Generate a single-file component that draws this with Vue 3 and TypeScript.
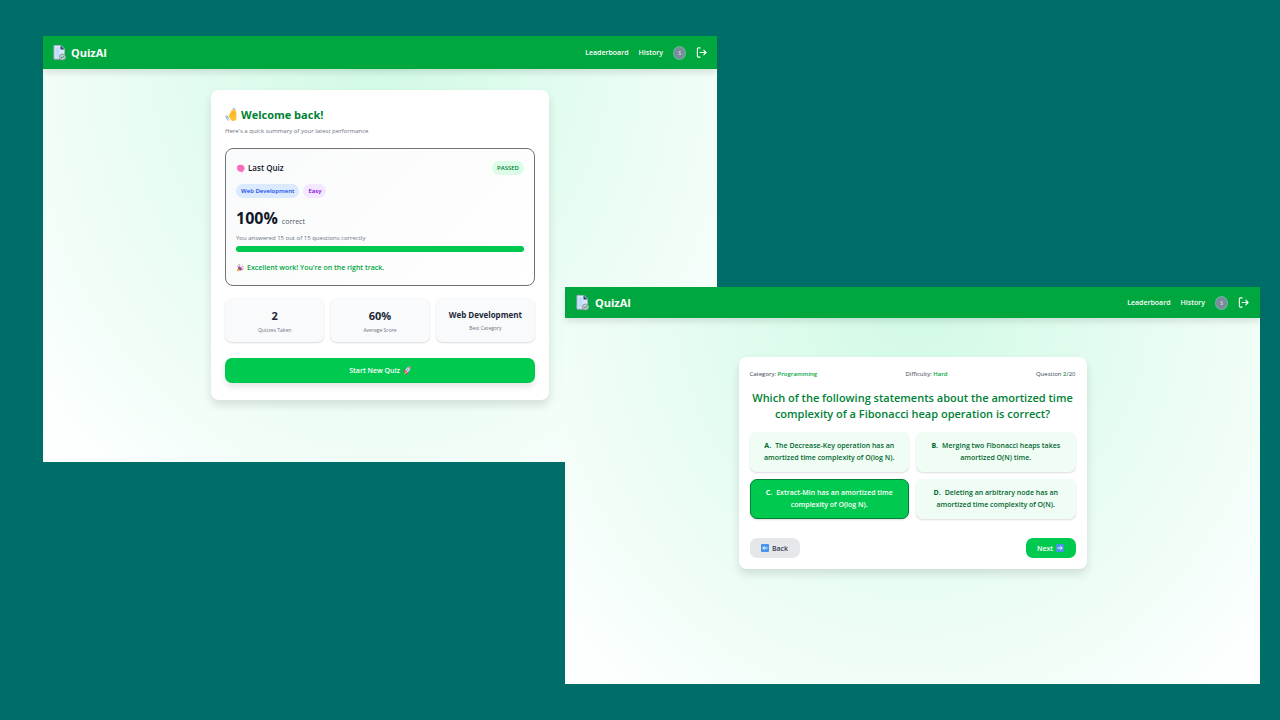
<script setup lang="ts">
import { ref } from 'vue'

interface Screen {
  id: 'summary' | 'question'
}
interface Stat {
  value: string
  label: string
  compact?: boolean
}
interface Option {
  letter: string
  text: string
}

const screens: Screen[] = [{ id: 'summary' }, { id: 'question' }]

const score = 100
const stats: Stat[] = [
  { value: '2', label: 'Quizzes Taken' },
  { value: '60%', label: 'Average Score' },
  { value: 'Web Development', label: 'Best Category', compact: true },
]

const options: Option[] = [
  { letter: 'A', text: 'The Decrease-Key operation has an amortized time complexity of O(log N).' },
  { letter: 'B', text: 'Merging two Fibonacci heaps takes amortized O(N) time.' },
  { letter: 'C', text: 'Extract-Min has an amortized time complexity of O(log N).' },
  { letter: 'D', text: 'Deleting an arbitrary node has an amortized time complexity of O(N).' },
]
const selected = ref('C')
</script>

<template>
  <main class="stage">
    <section v-for="screen in screens" :key="screen.id" class="window" :class="screen.id">
      <header class="topbar">
        <a class="brand" href="#">
          <svg class="logo" viewBox="0 0 26 32" preserveAspectRatio="none" aria-hidden="true">
            <path d="M2 1h14l7 7v20H2z" fill="#d6e8fb" stroke="#a9b4cf" stroke-width="2" />
            <path d="M5 5h8v19H5z" fill="#bfdcf8" />
            <path d="M15 1l8 8h-8z" fill="#30406e" />
            <path d="M3 29h13" stroke="#8f9bb0" stroke-width="2" />
            <circle cx="19" cy="24" r="6" fill="#b4d2c6" stroke="#8b9b9c" stroke-width="2" />
            <path d="M16 24l2 2 4-4" fill="none" stroke="#55908a" stroke-width="2" />
          </svg>
          <span>QuizAI</span>
        </a>
        <nav class="nav">
          <a href="#">Leaderboard</a>
          <a href="#">History</a>
          <span class="avatar">S</span>
          <button class="logout" type="button" aria-label="Log out">
            <svg viewBox="0 0 24 24" fill="none" stroke="currentColor" stroke-width="2.4" stroke-linecap="round" stroke-linejoin="round">
              <path d="M9 2H5a2 2 0 0 0-2 2v16a2 2 0 0 0 2 2h4" />
              <path d="M9 12h13M17 7l5 5-5 5" />
            </svg>
          </button>
        </nav>
      </header>

      <div v-if="screen.id === 'summary'" class="card">
        <h1 class="welcome">
          <svg class="wave" viewBox="0 0 24 28" preserveAspectRatio="none" aria-hidden="true">
            <path d="M9 13l4-8c1-3 4-3 4-1 2-1 4 0 4 2 2 1 2 3 2 5v8c0 5-3 7-6 7-5 0-6-4-9-8-2-3-1-5 1-5z" fill="#ffc02e" />
            <path d="M15 8l-2 7M18 7l-1 8" stroke="#ed9b2d" stroke-width="1.2" fill="none" />
            <path d="M2 15c0 5 2 8 5 10M5 16c0 3 1 5 3 7M16 1c3 0 4 1 5 3" stroke="#6ca9d2" stroke-width="2" fill="none" />
          </svg>
          Welcome back!
        </h1>
        <p class="subtitle">Here's a quick summary of your latest performance</p>

        <section class="last">
          <div class="last-head">
            <h2>
              <svg class="brain" viewBox="0 0 20 20" preserveAspectRatio="none" aria-hidden="true">
                <path d="M2 9C1 4 6 1 10 2c5-1 9 3 9 7 1 4-1 6-3 6l-1 4-4-2c-5 1-9-3-9-8z" fill="#fb72bd" />
                <path d="M5 6c3-2 4 1 3 3M11 4c-1 3 1 4 4 4M5 12c3-2 5 0 5 3M12 13c0-3 2-3 4-2" fill="none" stroke="#e660ac" stroke-width="1.2" />
              </svg>
              Last Quiz
            </h2>
            <span class="chip passed">PASSED</span>
          </div>
          <div class="chips">
            <span class="chip topic">Web Development</span>
            <span class="chip level">Easy</span>
          </div>
          <p class="score"><strong>{{ score }}%</strong> <span>correct</span></p>
          <p class="answered">You answered 15 out of 15 questions correctly</p>
          <div class="track" role="progressbar" :aria-valuenow="score" aria-valuemin="0" aria-valuemax="100" aria-label="Score">
            <div class="fill" :style="{ width: score + '%' }"></div>
          </div>
          <p class="praise">
            <svg class="party" viewBox="0 0 20 20" preserveAspectRatio="none" aria-hidden="true">
              <path d="M2 19L6 7l8 8z" fill="#f8b53a" />
              <path d="M5 10l6 6M4 14l3 3" stroke="#d3573d" stroke-width="1.6" />
              <ellipse cx="10" cy="11" rx="3" ry="6" transform="rotate(-45 10 11)" fill="#7f4aa0" />
              <path d="M10 8c-2-3 0-4-1-7M12 10c2-4 5-3 7-3M13 13c2-1 4 0 5 2" fill="none" stroke="#e94c92" stroke-width="1.8" />
              <path d="M14 2h2v2h-2zM3 4h2v2H3z" fill="#36a4e5" />
              <path d="M17 10h2v2h-2zM6 1h2v2H6z" fill="#43b76a" />
            </svg>
            Excellent work! You're on the right track.
          </p>
        </section>

        <div class="stats">
          <div v-for="stat in stats" :key="stat.label" class="stat" :class="{ compact: stat.compact }">
            <strong>{{ stat.value }}</strong>
            <span>{{ stat.label }}</span>
          </div>
        </div>

        <button class="start" type="button">
          Start New Quiz
          <svg class="rocket" viewBox="0 0 20 20" preserveAspectRatio="none" aria-hidden="true">
            <path d="M8 7l-7 3 1 4 5 1M13 12l-2 7-4-1-1-4" fill="#e63d67" />
            <path d="M5 13C7 5 12 1 19 1c0 7-4 12-11 15z" fill="#dbe2ee" />
            <path d="M13 2l6-1-1 6z" fill="#ea4774" />
            <circle cx="12" cy="8" r="2" fill="#5292d1" />
            <path d="M6 10l4 4" stroke="#d0518a" stroke-width="3" />
            <path d="M5 14l2 2-5 3z" fill="#ffae35" />
          </svg>
        </button>
      </div>

      <div v-else class="card">
        <div class="meta">
          <span>Category: <b>Programming</b></span>
          <span>Difficulty: <b>Hard</b></span>
          <span>Question <b>2</b>/20</span>
        </div>
        <h1 class="prompt">Which of the following statements about the amortized time complexity of a Fibonacci heap operation is correct?</h1>
        <div class="options">
          <button
            v-for="option in options"
            :key="option.letter"
            type="button"
            class="option"
            :class="{ active: option.letter === selected }"
            :aria-pressed="option.letter === selected"
            @click="selected = option.letter"
          >
            <b>{{ option.letter }}.</b>{{ option.text }}
          </button>
        </div>
        <div class="actions">
          <button class="step back" type="button">
            <svg viewBox="0 0 16 16" aria-hidden="true">
              <rect width="16" height="16" rx="2" fill="#4795ed" />
              <path d="M13 8H4M7 4.500L3.500 8 7 11.500" fill="none" stroke="#fff" stroke-width="2" />
            </svg>
            Back
          </button>
          <button class="step next" type="button">
            Next
            <svg viewBox="0 0 16 16" aria-hidden="true">
              <rect width="16" height="16" rx="2" fill="#4795ed" />
              <path d="M3 8h9M9 4.500L12.500 8 9 11.500" fill="none" stroke="#fff" stroke-width="2" />
            </svg>
          </button>
        </div>
      </div>
    </section>
  </main>
</template>

<style>
body {
  margin: 0;
  background: #006e68;
}
</style>

<style scoped>
* {
  box-sizing: border-box;
}
.stage {
  position: relative;
  min-height: 100vh;
  background: #006e68;
  font-family: "Open Sans", "Noto Sans", sans-serif;
  overflow: hidden;
}
h1,
h2,
p {
  margin: 0;
}
button {
  border: 0;
  padding: 0;
  font: inherit;
  cursor: pointer;
}
a {
  color: inherit;
  text-decoration: none;
}
.window {
  position: absolute;
  display: flex;
  flex-direction: column;
  align-items: center;
  background: radial-gradient(ellipse at top, #d0fae5, #ecfdf5 60%, #ffffff);
}
.window.summary {
  top: 36px;
  left: 43px;
  right: 563px;
  min-height: 426px;
}
.window.question {
  top: 287px;
  left: 565px;
  right: 20px;
  min-height: 397px;
}
.topbar {
  align-self: stretch;
  display: flex;
  align-items: center;
  justify-content: space-between;
  height: 31px;
  padding: 0 11px;
  background: #00a63e;
  color: #ffffff;
  box-shadow: 0 4px 6px rgba(0, 0, 0, 0.1);
}
.summary .topbar {
  height: 33px;
  padding: 0 10px;
}
.brand {
  display: flex;
  align-items: center;
  gap: 5px;
  font-size: 11px;
  font-weight: 700;
}
.question .brand {
  gap: 6px;
}
.logo {
  width: 13px;
  height: 16px;
}
.nav {
  display: flex;
  align-items: center;
  gap: 10px;
  font-size: 7px;
  font-weight: 600;
}
.avatar {
  display: flex;
  align-items: center;
  justify-content: center;
  width: 13px;
  height: 14px;
  border: 1px solid #64bd92;
  border-radius: 50%;
  background: #7b8b9d;
  color: #dce4ea;
  font-size: 5px;
}
.logout {
  display: flex;
  background: none;
  color: #ffffff;
}
.logout svg {
  width: 11px;
  height: 11px;
}
.card {
  background: #ffffff;
  border-radius: 8px;
  box-shadow: 0 5px 10px rgba(0, 0, 0, 0.12);
}
.summary .card {
  width: 338px;
  margin-top: 21px;
  padding: 17px 14px;
}
.welcome {
  display: flex;
  align-items: center;
  gap: 4px;
  color: #008236;
  font-size: 11px;
  line-height: 16px;
  font-weight: 700;
}
.wave {
  width: 12px;
  height: 14px;
}
.subtitle {
  margin-top: 2px;
  color: #6a7282;
  font-size: 6px;
  line-height: 12px;
}
.last {
  margin-top: 11px;
  padding: 12px 10px 11px;
  border: 1px solid #6f7276;
  border-radius: 8px;
  background: linear-gradient(135deg, #f9fafb, #ffffff);
}
.last-head {
  display: flex;
  align-items: center;
  justify-content: space-between;
}
.last-head h2 {
  display: flex;
  align-items: center;
  gap: 3px;
  color: #101828;
  font-size: 8px;
  line-height: 14px;
  font-weight: 600;
}
.brain {
  width: 9px;
  height: 9px;
}
.chip {
  padding: 0 5px;
  border-radius: 7px;
  font-size: 6px;
  line-height: 14px;
  font-weight: 600;
}
.passed {
  background: #dcfce7;
  color: #008236;
}
.chips {
  display: flex;
  gap: 4px;
  margin-top: 9px;
}
.topic {
  background: #dbeafe;
  color: #1447e6;
}
.level {
  background: #f3e8ff;
  color: #8200db;
}
.score {
  display: flex;
  align-items: baseline;
  gap: 4px;
  margin-top: 10px;
  line-height: 20px;
}
.score strong {
  color: #101828;
  font-size: 16px;
}
.score span {
  color: #4a5565;
  font-size: 7px;
}
.answered {
  color: #6a7282;
  font-size: 6px;
  line-height: 12px;
}
.track {
  height: 6px;
  margin-top: 2px;
  border-radius: 3px;
  background: #e5e7eb;
}
.fill {
  height: 100%;
  border-radius: 3px;
  background: #00c950;
}
.praise {
  display: flex;
  align-items: center;
  gap: 3px;
  margin-top: 10px;
  color: #00a63e;
  font-size: 7px;
  line-height: 12px;
  font-weight: 600;
}
.party {
  width: 8px;
  height: 8px;
}
.stats {
  display: grid;
  grid-template-columns: repeat(3, 1fr);
  gap: 6px;
  margin-top: 12px;
}
.stat {
  display: flex;
  flex-direction: column;
  align-items: center;
  height: 44px;
  padding-top: 10px;
  border-radius: 7px;
  background: #f9fafb;
  box-shadow: 0 1px 2px rgba(0, 0, 0, 0.14);
}
.stat strong {
  color: #1e2939;
  font-size: 11px;
  line-height: 16px;
}
.stat span {
  color: #6a7282;
  font-size: 5px;
  line-height: 12px;
}
.stat.compact strong {
  font-size: 8px;
  line-height: 14px;
}
.start {
  display: flex;
  align-items: center;
  justify-content: center;
  gap: 3px;
  width: 100%;
  height: 25px;
  margin-top: 16px;
  border-radius: 7px;
  background: #00c950;
  color: #ffffff;
  font-size: 7px;
  font-weight: 600;
  box-shadow: 0 4px 6px rgba(0, 0, 0, 0.1);
}
.rocket {
  width: 8px;
  height: 9px;
}
.question .card {
  width: 348px;
  margin-top: 39px;
  padding: 11px;
}
.meta {
  display: flex;
  justify-content: space-between;
  color: #364153;
  font-size: 6px;
  line-height: 12px;
  font-weight: 500;
}
.meta b {
  color: #00a63e;
  font-weight: 600;
}
.prompt {
  margin-top: 10px;
  color: #008236;
  font-size: 11px;
  line-height: 16px;
  font-weight: 600;
  text-align: center;
}
.options {
  display: grid;
  grid-template-columns: 1fr 1fr;
  gap: 7px;
  margin-top: 10px;
}
.option {
  min-height: 40px;
  padding: 7px 12px;
  border: 1px solid #f0fdf4;
  border-radius: 7px;
  background: #f0fdf4;
  color: #016630;
  font-size: 7px;
  line-height: 12px;
  font-weight: 600;
  text-align: center;
  box-shadow: 0 1px 2px rgba(0, 0, 0, 0.14);
}
.option b {
  margin-right: 4px;
  font-weight: 700;
}
.option.active {
  border-color: #008236;
  background: #00c950;
  color: #ffffff;
}
.actions {
  display: flex;
  justify-content: space-between;
  margin-top: 19px;
}
.step {
  display: flex;
  align-items: center;
  justify-content: center;
  gap: 3px;
  width: 50px;
  height: 20px;
  border-radius: 7px;
  font-size: 7px;
  font-weight: 600;
}
.step svg {
  width: 8px;
  height: 8px;
}
.back {
  background: #e5e7eb;
  color: #364153;
}
.next {
  background: #00c950;
  color: #ffffff;
}
</style>
